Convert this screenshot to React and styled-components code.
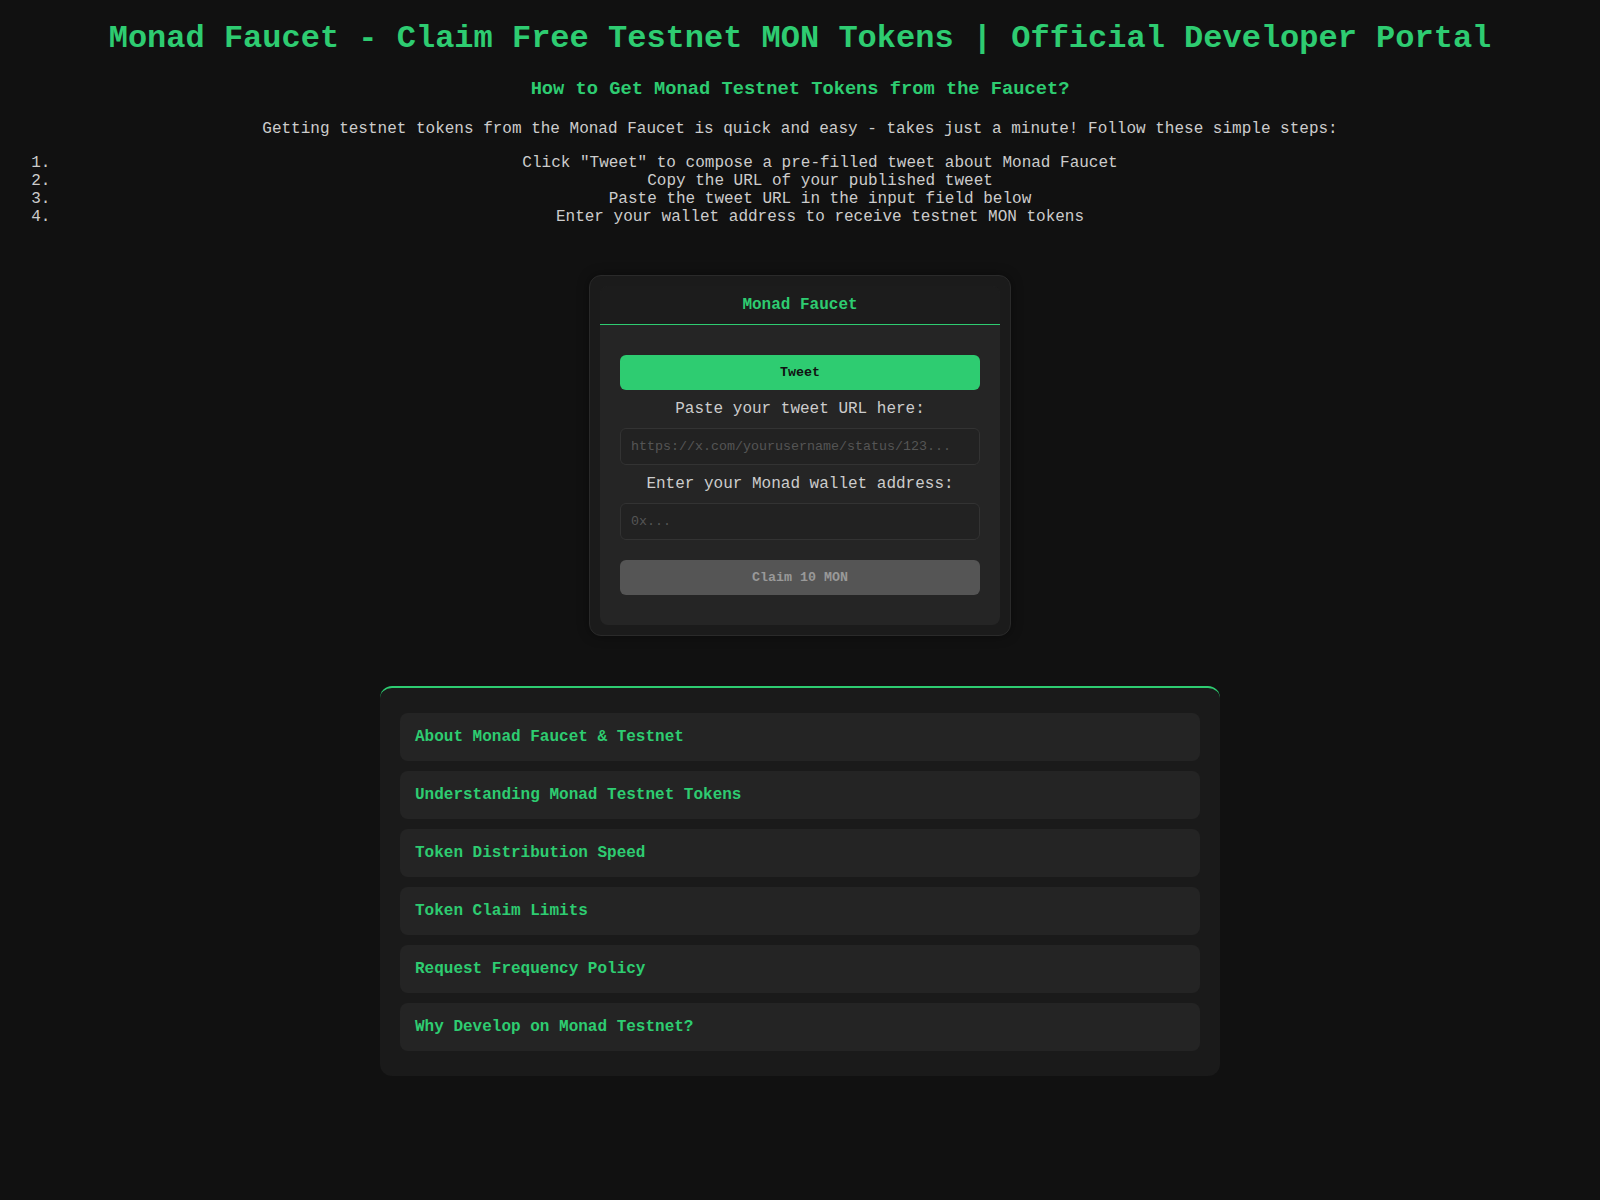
import React from "react";
import styled, { createGlobalStyle } from "styled-components";

const GlobalStyle = createGlobalStyle`
  body {
    margin: 0;
    background-color: #111111;
    color: #cccccc;
    font-family: "Liberation Mono", "Courier New", monospace;
  }
`;

const Page = styled.div`
  padding: 20px;
  text-align: center;
`;

const Title = styled.h1`
  font-size: 32px;
  color: #2ecc71;
  margin: 0 0 21px;
`;

const Guide = styled.section`
  > h3 {
    font-size: 18.72px;
    color: #2ecc71;
    margin: 0 0 20px;
  }
  > p {
    font-size: 16px;
    margin: 0 0 16px;
  }
`;

const Steps = styled.ol`
  margin: 0;
  padding-left: 40px;
  font-size: 16px;
  li {
    text-align: center;
  }
`;

const Card = styled.div`
  width: 400px;
  margin: 49px auto 0;
  padding: 10px;
  background-color: #1b1b1b;
  border: 1px solid #2a2a2a;
  border-radius: 12px;
  box-shadow: 0 0 12px rgba(0, 0, 0, 0.4);
`;

const Panel = styled.div`
  background-color: #252525;
  border-radius: 8px;
  overflow: hidden;
`;

const PanelHeader = styled.div`
  padding: 10px;
  background-color: #1c1c1c;
  border-bottom: 1px solid #2ecc71;
  color: #2ecc71;
  font-weight: bold;
  font-size: 16px;
`;

const PanelBody = styled.div`
  display: flex;
  flex-direction: column;
  gap: 10px;
  padding: 30px 20px;
`;

const Button = styled.button`
  height: 35px;
  border: none;
  border-radius: 6px;
  font-family: inherit;
  font-size: 13.33px;
  font-weight: bold;
  cursor: ${(p) => (p.disabled ? "not-allowed" : "pointer")};
  background-color: ${(p) => (p.disabled ? "#555555" : "#2ecc71")};
  color: ${(p) => (p.disabled ? "#999999" : "#111111")};
  margin-top: ${(p) => (p.$spaced ? "10px" : "0")};
`;

const Label = styled.label`
  font-size: 16px;
  color: #cccccc;
  line-height: 18px;
`;

const Field = styled.input`
  box-sizing: border-box;
  height: 37px;
  padding: 0 10px;
  background-color: #222222;
  border: 1px solid #333333;
  border-radius: 6px;
  color: #cccccc;
  font-family: inherit;
  font-size: 13.33px;
  outline: none;
  &::placeholder {
    color: #555555;
  }
`;

const Faq = styled.section`
  box-sizing: border-box;
  width: 840px;
  margin: 50px auto 0;
  padding: 25px 20px;
  background-color: #1a1a1a;
  border-top: 2px solid #2ecc71;
  border-radius: 12px;
  display: flex;
  flex-direction: column;
  gap: 10px;
`;

const FaqItem = styled.div`
  padding: 15px;
  background-color: #242424;
  border-radius: 8px;
  text-align: left;
  color: #2ecc71;
  font-weight: bold;
  font-size: 16px;
  cursor: pointer;
`;

const faqTitles = [
  "About Monad Faucet & Testnet",
  "Understanding Monad Testnet Tokens",
  "Token Distribution Speed",
  "Token Claim Limits",
  "Request Frequency Policy",
  "Why Develop on Monad Testnet?",
];

const App = () => {
  return (
    <Page>
      <GlobalStyle />
      <Title>Monad Faucet - Claim Free Testnet MON Tokens | Official Developer Portal</Title>
      <Guide>
        <h3>How to Get Monad Testnet Tokens from the Faucet?</h3>
        <p>
          Getting testnet tokens from the Monad Faucet is quick and easy - takes just a minute! Follow
          these simple steps:
        </p>
        <Steps>
          <li>Click "Tweet" to compose a pre-filled tweet about Monad Faucet</li>
          <li>Copy the URL of your published tweet</li>
          <li>Paste the tweet URL in the input field below</li>
          <li>Enter your wallet address to receive testnet MON tokens</li>
        </Steps>
      </Guide>

      <Card>
        <Panel>
          <PanelHeader>Monad Faucet</PanelHeader>
          <PanelBody>
            <Button type="button">Tweet</Button>
            <Label htmlFor="tweet-url">Paste your tweet URL here:</Label>
            <Field id="tweet-url" type="text" placeholder="https://x.com/yourusername/status/123..." />
            <Label htmlFor="wallet">Enter your Monad wallet address:</Label>
            <Field id="wallet" type="text" placeholder="0x..." />
            <Button type="button" disabled $spaced>
              Claim 10 MON
            </Button>
          </PanelBody>
        </Panel>
      </Card>

      <Faq>
        {faqTitles.map((t) => (
          <FaqItem key={t}>{t}</FaqItem>
        ))}
      </Faq>
    </Page>
  );
};

export default App;
